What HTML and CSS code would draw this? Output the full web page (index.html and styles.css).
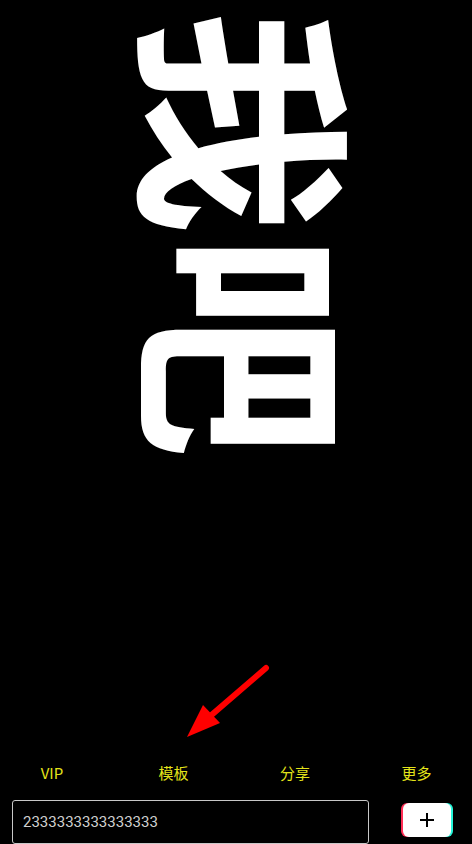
FILE: index.html
```html
<!DOCTYPE html>
<html lang="zh-CN">
<head>
    <meta charset="UTF-8">
    <meta name="viewport" content="width=device-width, initial-scale=1.0">
    <title>弹幕</title>
    <link rel="stylesheet" href="styles.css">
</head>
<body>
    <div class="screen">
        <div class="stage">
            <div class="marquee">我吧</div>
            <!-- 提示箭头 -->
            <svg class="hint-arrow" width="100" height="90" viewBox="0 0 100 90">
                <line x1="86" y1="8" x2="28" y2="58" stroke="#ff0000" stroke-width="6" stroke-linecap="round"/>
                <polygon points="7,77 23,45 40,63" fill="#ff0000"/>
            </svg>
        </div>

        <div class="menu">
            <span class="menu-item">VIP</span>
            <span class="menu-item">模板</span>
            <span class="menu-item">分享</span>
            <span class="menu-item">更多</span>
        </div>

        <div class="composer">
            <div class="text-input">2333333333333333</div>
            <div class="add-btn">
                <svg width="16" height="16" viewBox="0 0 16 16">
                    <path d="M8 1v14M1 8h14" stroke="#000" stroke-width="2"/>
                </svg>
            </div>
        </div>
    </div>
</body>
</html>
```

FILE: styles.css
```css
html, body {
    margin: 0;
    padding: 0;
    background: #000;
    height: 100%;
    overflow: hidden;
}

.screen {
    display: flex;
    flex-direction: column;
    height: 844px;
    font-family: Roboto, "Noto Sans CJK SC", sans-serif;
}

.stage {
    position: relative;
    height: 760px;
    display: flex;
    justify-content: center;
    padding-left: 38px;
    box-sizing: border-box;
}

.marquee {
    writing-mode: vertical-rl;
    text-orientation: sideways;
    font-family: "Noto Sans CJK SC", sans-serif;
    font-weight: 700;
    font-size: 224px;
    line-height: 1;
    color: #fff;
    margin-top: 10px;
}

.hint-arrow {
    position: absolute;
    left: 180px;
    top: 660px;
}

.menu {
    display: grid;
    grid-template-columns: repeat(4, 80px);
    column-gap: 41.5px;
    padding-left: 12px;
    height: 35px;
    align-items: center;
}

.menu-item {
    text-align: center;
    color: #e4e41a;
    font-size: 15px;
    font-family: "Noto Sans CJK SC", sans-serif;
}

.composer {
    display: flex;
    align-items: flex-start;
    padding-left: 12px;
    margin-top: 10px;
}

.text-input {
    width: 357px;
    height: 44px;
    box-sizing: border-box;
    border: 1px solid #c8c8c8;
    border-radius: 3px;
    padding: 12px 0 0 10px;
    color: #cfcfcf;
    font-size: 15px;
    font-family: Roboto, sans-serif;
}

.add-btn {
    width: 48px;
    height: 34px;
    margin-left: 34px;
    margin-top: 3px;
    background: #fff;
    border-radius: 6px;
    display: flex;
    align-items: center;
    justify-content: center;
    box-shadow: -2px 0 0 #ff2d55, 2px 0 0 #25f4d8;
}
```
